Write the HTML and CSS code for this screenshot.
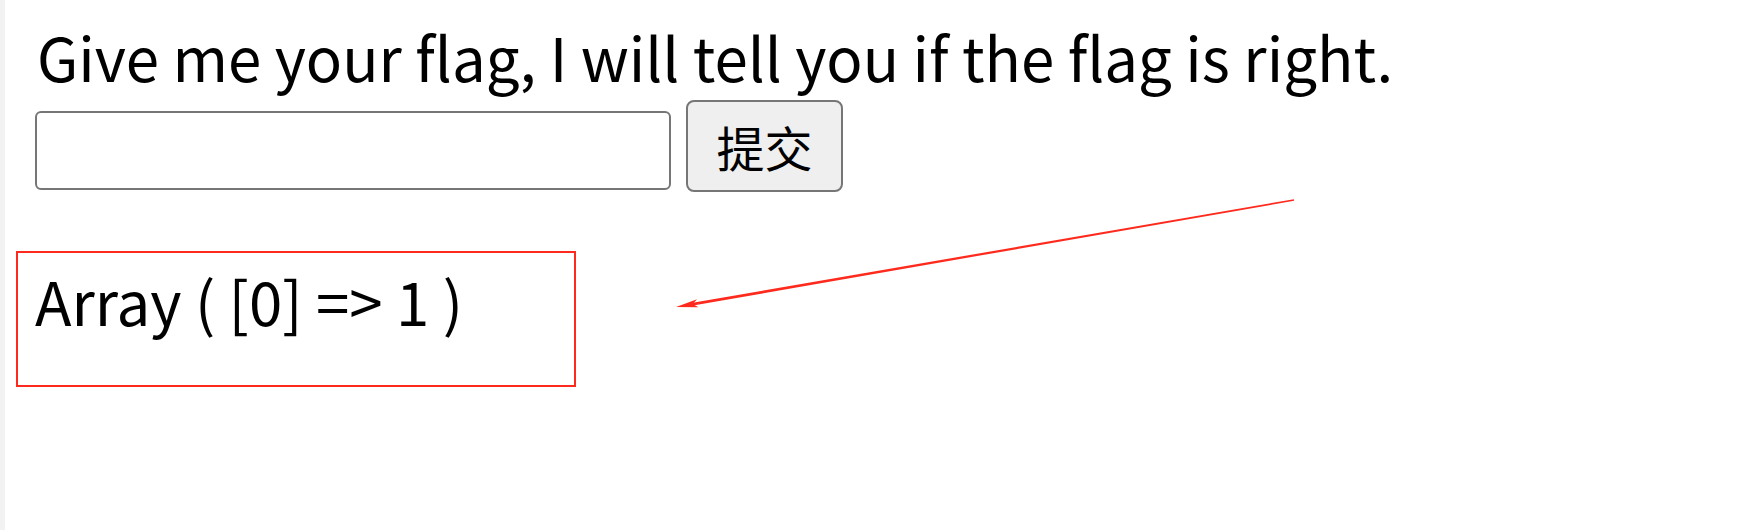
FILE: index.html
```html
<!DOCTYPE html>
<html lang="en">
<head>
<meta charset="utf-8">
<title>flag</title>
<link rel="stylesheet" href="styles.css">
</head>
<body>
<div class="page">
  <p class="title">Give me your flag, I will tell you if the flag is right.</p>
  <form class="row">
    <input class="field" type="text" name="flag">
    <button class="submit" type="button">提交</button>
  </form>
  <div class="result">Array ( [0] =&gt; 1 )</div>
  <svg class="arrow" width="1746" height="530" viewBox="0 0 1746 530">
    <polygon points="1294.14,200.79 1293.86,199.21 689.76,303.22 690.24,305.98" fill="#fd2a1d"/>
    <polygon points="676,307 697,299.3 692.8,304.1 698.4,307.2" fill="#fd2a1d"/>
  </svg>
</div>
</body>
</html>
```
FILE: styles.css
```css
html, body {
  margin: 0;
  padding: 0;
  background: #ffffff;
}
.page {
  position: relative;
  min-height: 530px;
  box-sizing: border-box;
  border-left: 5px solid #f2f2f2;
  font-family: "Noto Sans CJK SC", "Noto Sans", sans-serif;
  color: #000;
  overflow: hidden;
}
.title {
  margin: 0;
  padding: 18px 0 0 32px;
  font-size: 60px;
  line-height: 76px;
  white-space: nowrap;
}
.row {
  display: flex;
  align-items: flex-start;
  gap: 15px;
  margin: 6px 0 0 30px;
}
.field {
  box-sizing: border-box;
  width: 636px;
  height: 79px;
  margin-top: 11px;
  border: 2px solid #767676;
  border-radius: 6px;
  background: #fff;
  padding: 0 6px;
  font-size: 48px;
}
.submit {
  box-sizing: border-box;
  width: 157px;
  height: 92px;
  border: 2px solid #767676;
  border-radius: 8px;
  background: #efefef;
  font-family: "Noto Sans CJK SC", sans-serif;
  font-size: 48px;
  color: #000;
  padding: 0;
}
.result {
  box-sizing: border-box;
  width: 560px;
  height: 136px;
  margin: 59px 0 0 11px;
  border: 2px solid #fd2a1d;
  padding: 9px 0 0 17px;
  font-size: 60px;
  line-height: 76px;
  white-space: nowrap;
}
.arrow {
  position: absolute;
  left: -5px;
  top: 0;
  pointer-events: none;
}
```
